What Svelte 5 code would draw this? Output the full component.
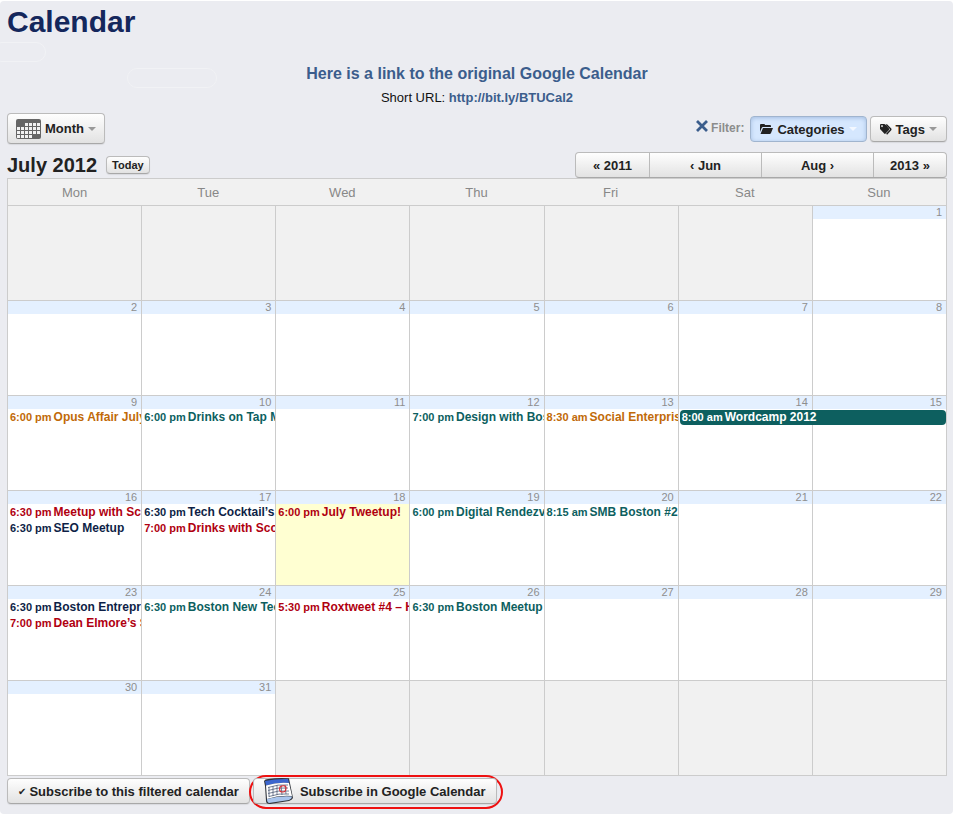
<script>
  const weekdays = ['Mon', 'Tue', 'Wed', 'Thu', 'Fri', 'Sat', 'Sun'];

  // July 1st 2012 is a Sunday
  const leadingBlanks = 6;
  const daysInMonth = 31;
  const today = 18;

  const events = {
    9: [{ time: '6:00 pm', title: 'Opus Affair July', category: 'orange' }],
    10: [{ time: '6:00 pm', title: 'Drinks on Tap M', category: 'teal' }],
    12: [{ time: '7:00 pm', title: 'Design with Bos', category: 'teal' }],
    13: [{ time: '8:30 am', title: 'Social Enterpris', category: 'orange' }],
    14: [{ time: '8:00 am', title: 'Wordcamp 2012', category: 'teal', span: 2 }],
    16: [
      { time: '6:30 pm', title: 'Meetup with Sco', category: 'red' },
      { time: '6:30 pm', title: 'SEO Meetup', category: 'navy' }
    ],
    17: [
      { time: '6:30 pm', title: 'Tech Cocktail’s', category: 'navy' },
      { time: '7:00 pm', title: 'Drinks with Sco', category: 'red' }
    ],
    18: [{ time: '6:00 pm', title: 'July Tweetup!', category: 'red' }],
    19: [{ time: '6:00 pm', title: 'Digital Rendezv', category: 'teal' }],
    20: [{ time: '8:15 am', title: 'SMB Boston #2', category: 'teal' }],
    23: [
      { time: '6:30 pm', title: 'Boston Entrepr', category: 'navy' },
      { time: '7:00 pm', title: 'Dean Elmore’s S', category: 'red' }
    ],
    24: [{ time: '6:30 pm', title: 'Boston New Tec', category: 'teal' }],
    25: [{ time: '5:30 pm', title: 'Roxtweet #4 – H', category: 'red' }],
    26: [{ time: '6:30 pm', title: 'Boston Meetup', category: 'teal' }]
  };

  const weeks = [];
  for (let start = 1 - leadingBlanks; start <= daysInMonth; start += 7) {
    weeks.push(
      weekdays.map((_, i) => {
        const day = start + i;
        return day > 0 && day <= daysInMonth ? day : null;
      })
    );
  }
</script>

<div class="page">
  <span class="outline outline-left"></span>
  <span class="outline outline-right"></span>

  <h1>Calendar</h1>

  <div class="intro">
    <h2><a href="#google">Here is a link to the original Google Calendar</a></h2>
    <p>Short URL: <a href="#short">http://bit.ly/BTUCal2</a></p>
  </div>

  <div class="toolbar">
    <button class="btn month-btn">
      <svg width="25" height="20" viewBox="0 0 25 20" aria-hidden="true">
        <rect width="25" height="20" rx="2" fill="#666" />
        <path
          d="M9 4h3v3H9zM13 4h3v3h-3zM17 4h3v3h-3zM21 4h3v3h-3zM1 8h3v3H1zM5 8h3v3H5zM9 8h3v3H9zM13 8h3v3h-3zM17 8h3v3h-3zM21 8h3v3h-3zM1 12h3v3H1zM5 12h3v3H5zM9 12h3v3H9zM13 12h3v3h-3zM17 12h3v3h-3zM21 12h3v3h-3zM1 16h3v3H1zM5 16h3v3H5zM9 16h3v3H9zM13 16h3v3h-3z"
          fill="#f2f2f2"
        />
      </svg>
      Month
      <span class="caret"></span>
    </button>

    <div class="filters">
      <a class="clear-filter" href="#clear" aria-label="Clear filter">
        <svg width="12" height="12" viewBox="0 0 12 12">
          <path d="M1 1l10 10M11 1L1 11" stroke="#3b5d8c" stroke-width="2.8" />
        </svg>
      </a>
      <span class="filter-label">Filter:</span>
      <button class="btn categories active">
        <svg width="13" height="10" viewBox="0 0 13 10" aria-hidden="true">
          <path d="M0 8V1Q0 0 1 0h3q1 0 1 1h5q1 0 1 1v1H3Q2 3 1.500 4.200Z" fill="#222" />
          <path d="M3 4h10l-2 5q-.4 1-1.400 1H.5Z" fill="#222" />
        </svg>
        Categories
        <span class="caret"></span>
      </button>
      <button class="btn tags">
        <svg width="12" height="11" viewBox="0 0 12 11" aria-hidden="true">
          <path
            fill-rule="evenodd"
            d="M0 1Q0 0 1 0h3.200q.7 0 1.200.5L9 4.500q.7.8 0 1.500l-3.400 3.600q-.7.700-1.400 0L.5 5.600Q0 5.100 0 4.400ZM2 1.200a.9.9 0 1 0 .01 0Z"
            fill="#222"
          />
          <path d="M6.300.5l4.200 4.200q.6.7 0 1.300L6.600 10.200" fill="none" stroke="#222" stroke-width="1.400" />
        </svg>
        Tags
        <span class="caret"></span>
      </button>
    </div>
  </div>

  <div class="title-row">
    <h2 class="month-title">July 2012</h2>
    <button class="btn today-btn">Today</button>
    <nav class="pager">
      <button class="year">« 2011</button>
      <button>‹ Jun</button>
      <button>Aug ›</button>
      <button class="year">2013 »</button>
    </nav>
  </div>

  <table>
    <thead>
      <tr>
        {#each weekdays as weekday}
          <th scope="col">{weekday}</th>
        {/each}
      </tr>
    </thead>
    <tbody>
      {#each weeks as week}
        <tr>
          {#each week as day}
            {#if day}
              <td class:today={day === today}>
                <div class="date">{day}</div>
                {#each events[day] ?? [] as event}
                  <a
                    class="event {event.category}"
                    class:multiday={event.span}
                    style:width={event.span ? `${event.span * 100}%` : null}
                    href="#event-{day}"
                  >
                    <span class="time">{event.time}</span>{event.title}
                  </a>
                {/each}
              </td>
            {:else}
              <td class="blank"></td>
            {/if}
          {/each}
        </tr>
      {/each}
    </tbody>
  </table>

  <div class="footer">
    <button class="btn subscribe"><span class="check">✔</span> Subscribe to this filtered calendar</button>
    <div class="highlight">
      <button class="btn google">
        <svg width="29" height="26" viewBox="0 0 29 26" aria-hidden="true">
          <path d="M0 3Q1 1 4 1Q14-.5 25 .3L29 20Q28 22 25 23L6 26Q2 26 2 23L1 8Z" fill="#30343b" />
          <path d="M1 3Q12 .5 24 1l1 4Q13 4 2 7.500Z" fill="#3c66ce" />
          <path d="M2 7.500Q13 4 25 5l3 13Q15 17 3 21Z" fill="#fff" />
          <path
            d="M4 9.500Q14 6 24 7M4 12.500q10-3.500 20-2.500M4 15.500q10-3.500 21-2.500M5 18.500q10-3.500 20-2.500M5 9v10M9 8v10M13 7v10M17 7l1 10M21 7l1 9"
            fill="none"
            stroke="#536078"
            stroke-width=".8"
          />
          <path d="M16 9q4-2.500 6 0 .5 5-3.500 5t-2.500-5Z" fill="none" stroke="#e0282e" stroke-width="1.200" />
          <path d="M3 21Q15 17.500 28 18.500q0 2-3 3.500L5 25Q3 24.500 3 21Z" fill="#a9c5ed" />
        </svg>
        Subscribe in Google Calendar
      </button>
    </div>
  </div>
</div>

<style>
  :global(body) {
    background: #fff;
  }

  .page {
    position: relative;
    box-sizing: border-box;
    margin-top: 1px;
    padding: 0 6px 5px 7px;
    overflow: hidden;
    border-radius: 4px;
    background: #ebecf1;
    color: #222;
    font-family: "Liberation Sans", Arial, sans-serif;
    font-size: 13px;
  }

  h1,
  h2,
  p {
    margin: 0;
  }

  h1 {
    color: #14275c;
    font-size: 30px;
    line-height: 42px;
  }

  a {
    color: #3b5d8c;
    text-decoration: none;
  }

  .outline {
    position: absolute;
    box-sizing: border-box;
    height: 20px;
    border: 1px solid #f1f2f5;
    border-radius: 10px;
  }

  .outline-left {
    top: 41px;
    left: -8px;
    width: 54px;
  }

  .outline-right {
    top: 67px;
    left: 127px;
    width: 90px;
  }

  .intro {
    padding-top: 19px;
    text-align: center;
  }

  .intro h2 {
    font-size: 16px;
    line-height: 24px;
  }

  .intro p {
    color: #111;
    line-height: 24px;
  }

  .intro p a {
    font-weight: bold;
  }

  .btn {
    display: inline-flex;
    align-items: center;
    box-sizing: border-box;
    height: 26px;
    margin: 0;
    border: 1px solid #bbb;
    border-bottom-color: #a8a8a8;
    border-radius: 4px;
    background: linear-gradient(#fefefe, #e2e2e2);
    box-shadow: 0 1px 1px rgba(0, 0, 0, 0.08);
    color: #222;
    font: bold 13px "Liberation Sans", Arial, sans-serif;
    white-space: nowrap;
  }

  .caret {
    border: 4px solid transparent;
    border-top-color: #999;
    border-bottom: 0;
  }

  .toolbar {
    display: flex;
    justify-content: space-between;
    padding-top: 3px;
  }

  .month-btn {
    gap: 4px;
    height: 31px;
    padding: 0 8px;
  }

  .filters {
    display: flex;
    gap: 3px;
    padding-top: 3px;
  }

  .clear-filter {
    padding-top: 4px;
  }

  .filter-label {
    margin-right: 3px;
    color: #8c8c8c;
    font-size: 12px;
    font-weight: bold;
    line-height: 24px;
  }

  .categories,
  .tags {
    gap: 4px;
    padding: 0 9px;
  }

  .active {
    border-color: #a0b4ce;
    background: #d5e7fe;
    box-shadow: inset 0 1px 4px rgba(70, 110, 170, 0.35);
  }

  .active .caret {
    border-top-color: #f3f8ff;
  }

  .title-row {
    display: flex;
    align-items: center;
    padding-top: 8px;
  }

  .month-title {
    font-size: 20px;
    line-height: 26px;
  }

  .today-btn {
    height: 18px;
    margin-left: 9px;
    padding: 0 5px;
    font-size: 11px;
  }

  .pager {
    display: flex;
    margin-left: auto;
    border: 1px solid #bbb;
    border-bottom-color: #a8a8a8;
    border-radius: 4px;
    background: linear-gradient(#fefefe, #e2e2e2);
  }

  .pager button {
    box-sizing: border-box;
    width: 112px;
    height: 24px;
    padding: 0;
    border: 0;
    border-left: 1px solid #bbb;
    background: none;
    color: #222;
    font: bold 13px "Liberation Sans", Arial, sans-serif;
  }

  .pager button:first-child {
    border-left: 0;
  }

  .pager .year {
    width: 73px;
  }

  table {
    width: 100%;
    border: solid #ccc;
    border-width: 0 1px 1px 0;
    border-spacing: 0;
    table-layout: fixed;
  }

  th {
    height: 26px;
    padding: 0;
    border-top: 1px solid #ccc;
    background: #f1f1f1;
    color: #888;
    font-weight: normal;
  }

  th:first-child {
    border-left: 1px solid #ccc;
  }

  td {
    position: relative;
    height: 94px;
    padding: 0;
    border: solid #ccc;
    border-width: 1px 0 0 1px;
    background: #fff;
    vertical-align: top;
  }

  td.today {
    background: #ffffd2;
  }

  td.blank {
    background: #f1f1f1;
  }

  .date {
    height: 13px;
    margin-bottom: 1px;
    padding-right: 4px;
    background: #e4f0ff;
    color: #8e8e8e;
    font-size: 11px;
    line-height: 13px;
    text-align: right;
  }

  .event {
    display: block;
    height: 16px;
    padding-left: 2px;
    overflow: hidden;
    font-size: 12px;
    font-weight: bold;
    line-height: 15px;
    white-space: nowrap;
  }

  .time {
    margin-right: 2px;
    font-size: 11px;
  }

  .orange {
    color: #c16a08;
  }

  .teal {
    color: #0d5f5f;
  }

  .red {
    color: #b00010;
  }

  .navy {
    color: #0e1f47;
  }

  /* runs across the neighbouring cells */
  .multiday {
    position: absolute;
    z-index: 1;
    left: 1px;
    height: 15px;
    box-sizing: border-box;
    border-radius: 4px;
    background: #0d5f5f;
    color: #fff;
  }

  .footer {
    display: flex;
    align-items: flex-start;
    margin-top: -1px;
  }

  .subscribe {
    gap: 3px;
    margin-top: 3px;
    padding: 0 10px;
  }

  .check {
    font: 10px "DejaVu Sans", sans-serif;
  }

  .highlight {
    position: relative;
    box-sizing: border-box;
    height: 34px;
    margin-left: -1px;
    padding: 1px 4px 0 2px;
    border: 2px solid #ee1111;
    border-radius: 17px;
  }

  .google {
    gap: 7px;
    padding: 0 10px;
  }
</style>
